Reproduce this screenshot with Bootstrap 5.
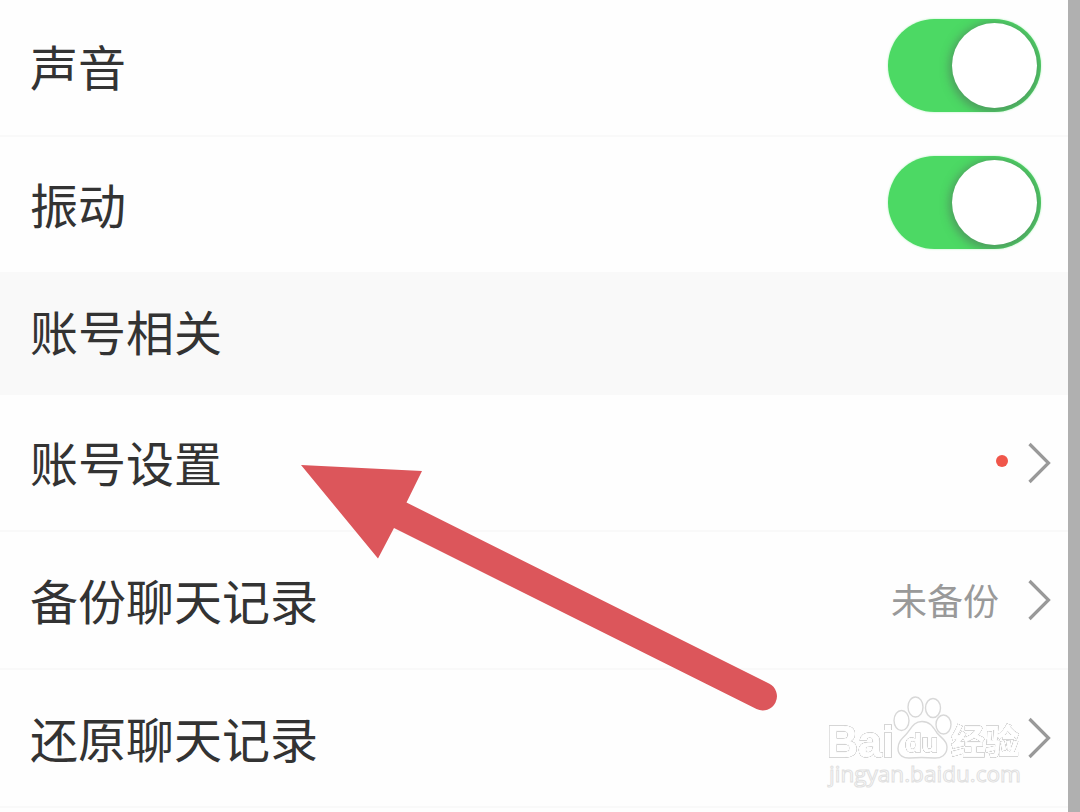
<!DOCTYPE html>
<html lang="zh-CN">
<head>
    <meta charset="UTF-8">
    <meta name="viewport" content="width=device-width, initial-scale=1.0">
    <title>设置</title>
    <link href="https://cdn.jsdelivr.net/npm/bootstrap@5.3.0/dist/css/bootstrap.min.css" rel="stylesheet">
    <style>
        body {
            font-family: "Noto Sans CJK SC", sans-serif;
            color: #333;
            background: #b0b0b0;
        }
        .screen {
            width: 1080px;
            height: 812px;
        }
        .settings {
            width: 1068px;
            height: 812px;
            background: #fefefe;
        }
        .setting-row {
            height: 138px;
            padding: 0 17px 0 30px;
            border-bottom: 2px solid #f9f9f9;
            font-size: 48px;
            line-height: 1;
        }
        .setting-row > span { padding-bottom: 3px; }
        .row-sound { height: 137px; padding: 0 27px 5px 30px; }
        .row-vibrate { height: 135px; padding: 0 27px 4px 30px; border-bottom: 0; }
        .row-sound > span, .row-vibrate > span { padding-bottom: 0; }
        .row-account { height: 137px; }
        .group-title {
            height: 123px;
            padding: 0 0 7px 30px;
            background: #f9f9f9;
            font-size: 48px;
            line-height: 1;
        }
        .switch-track {
            width: 153px;
            height: 93px;
            padding: 4px;
            border-radius: 47px;
            background: #4cd964;
            overflow: hidden;
        }
        .switch-wrap {
            filter: drop-shadow(0 0 1px #b5f5c0);
        }
        .switch-knob {
            width: 85px;
            height: 85px;
            border-radius: 50%;
            background: #fff;
            box-shadow: 0 2px 9px 3px rgba(80, 100, 90, .5);
        }
        .hint {
            font-size: 36px;
            color: #999;
            padding-bottom: 2px;
        }
        .red-dot {
            width: 12px;
            height: 12px;
            margin-right: 15px;
            border-radius: 50%;
            background: #f0564a;
        }
        .latin { font-family: "Open Sans", sans-serif; }
        .logo-latin { font-family: "Liberation Sans", sans-serif; font-weight: bold; }
        .logo-text {
            stroke: #fff;
            stroke-width: 1;
            filter: drop-shadow(0 0 .7px #888) drop-shadow(0 0 .4px #bbb);
        }
    </style>
</head>
<body>
    <div class="screen position-relative overflow-hidden">
        <div class="settings d-flex flex-column">
            <div class="setting-row row-sound d-flex align-items-center justify-content-between">
                <span>声音</span>
                <div class="switch-wrap"><div class="switch-track d-flex justify-content-end"><div class="switch-knob"></div></div></div>
            </div>
            <div class="setting-row row-vibrate d-flex align-items-center justify-content-between">
                <span>振动</span>
                <div class="switch-wrap"><div class="switch-track d-flex justify-content-end"><div class="switch-knob"></div></div></div>
            </div>

            <div class="group-title d-flex align-items-center">账号相关</div>

            <div class="setting-row row-account d-flex align-items-center justify-content-between">
                <span>账号设置</span>
                <div class="d-flex align-items-center">
                    <span class="red-dot mb-1"></span>
                    <svg width="28" height="42" viewBox="0 0 28 42" fill="none" stroke="#999" stroke-width="3.2"><path d="M6.500 2 25.500 21 6.500 40"/></svg>
                </div>
            </div>
            <div class="setting-row d-flex align-items-center justify-content-between">
                <span>备份聊天记录</span>
                <div class="d-flex align-items-center">
                    <span class="hint me-4">未备份</span>
                    <svg width="28" height="42" viewBox="0 0 28 42" fill="none" stroke="#999" stroke-width="3.2"><path d="M6.500 2 25.500 21 6.500 40"/></svg>
                </div>
            </div>
            <div class="setting-row d-flex align-items-center justify-content-between">
                <span>还原聊天记录</span>
                <svg width="28" height="42" viewBox="0 0 28 42" fill="none" stroke="#999" stroke-width="3.2"><path d="M6.500 2 25.500 21 6.500 40"/></svg>
            </div>
        </div>

        <!-- Pointer arrow and watermark float over the list -->
        <svg class="position-absolute top-0 start-0" width="1080" height="812" viewBox="0 0 1080 812">
            <path fill="#dc565b" d="M301 465 422 471 406.500 502.500 769 683.500A14 14 0 0 1 756.500 709L394 528 378 558.500Z"/>
            <g fill="#fff" stroke="#d8d8d8" stroke-width="1.400">
                <ellipse cx="901.500" cy="720.500" rx="7.500" ry="10"/>
                <ellipse cx="915.500" cy="707" rx="7.500" ry="10"/>
                <ellipse cx="933" cy="708" rx="7.500" ry="9.500"/>
                <ellipse cx="943.500" cy="724.500" rx="7.500" ry="9.500"/>
                <path d="M922 721.500c-9 0-11 8-16 13-5 5-8 8-8 14 0 7 6 10 12 9.500 5-.5 18-.5 24 0 7 .5 13-3 13-11 0-7-6-9-10-14-4-6-7-11.500-15-11.500z"/>
            </g>
            <g fill="#fff">
                <text class="logo-latin logo-text" x="827" y="756.500" font-size="44" textLength="67" lengthAdjust="spacingAndGlyphs">Bai</text>
                <text class="logo-latin logo-text" x="905" y="751.500" font-size="25" textLength="33" lengthAdjust="spacingAndGlyphs">du</text>
                <text class="logo-text" x="951" y="754" font-size="34" font-weight="700" textLength="68" lengthAdjust="spacingAndGlyphs">经验</text>
                <text class="latin" x="829" y="782" font-size="22" stroke="#e0e0e0" stroke-width="1" textLength="192" lengthAdjust="spacingAndGlyphs">jingyan.baidu.com</text>
            </g>
        </svg>
    </div>

    <script src="https://cdn.jsdelivr.net/npm/bootstrap@5.3.0/dist/js/bootstrap.bundle.min.js"></script>
</body>
</html>
